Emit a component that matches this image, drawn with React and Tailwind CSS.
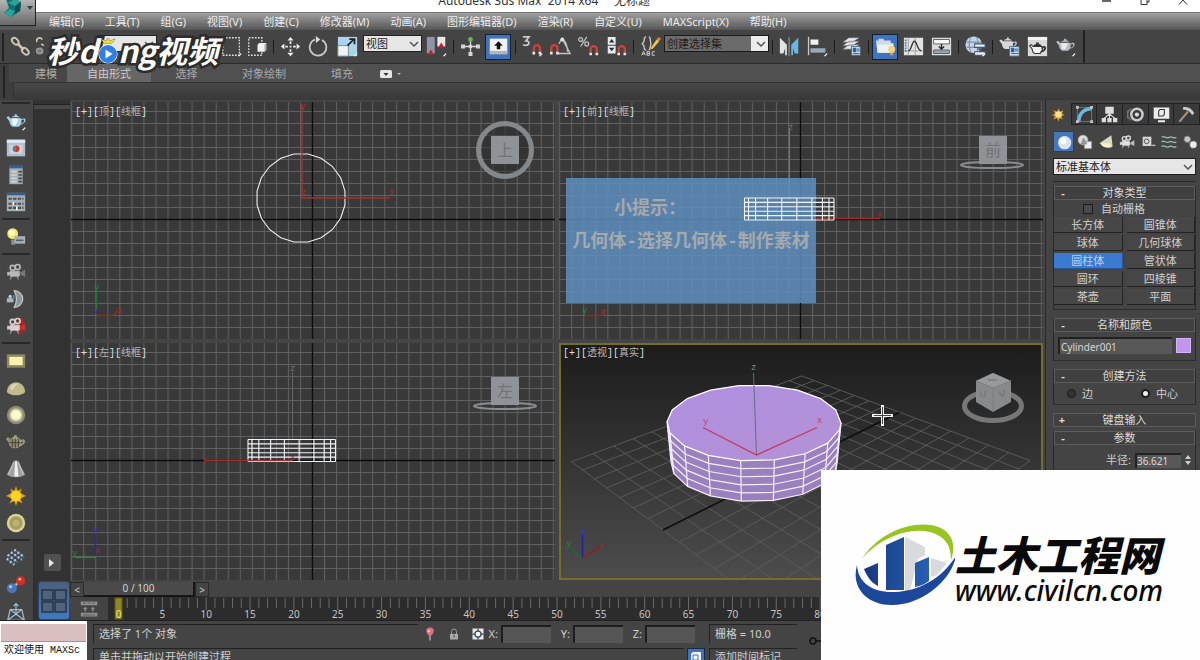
import React from "react";

/* ---------- icon drawings, all on a 24 x 24 grid ---------- */

const TEAPOT = "M6 11h10c1 3 .5 6-2 8H8c-2-1-3-3-3-5l-3-4 2-1 2 2zM7 10c1-2 7-2 8 0zM10 7h2v2h-2zM16 12c4-2 5 0 4 2s-3 3-5 3l1-1c2 0 3-2 3-3s-1-1-3 0z";
const corner = <path d="M19 23l4-4v2l-2 2z" fill="#eee" />;
const magnet = (x, y) => (
  <g transform={`translate(${x} ${y})`}>
    <path d="M1.500 9V5a3.500 3.500 0 0 1 7 0v4" fill="none" stroke="#d2413f" strokeWidth="2.600" />
    <path d="M0 9h3v3H0zM7 9h3v3H7z" fill="#e6e6e6" />
  </g>
);
const camera = (body, lens) => (
  <g>
    <circle cx="8" cy="7" r="3" fill="none" stroke={body} strokeWidth="2" />
    <circle cx="14" cy="6" r="3" fill="none" stroke={body} strokeWidth="2" />
    <path d="M5 11h11v6H5zM2 12l3 1v2l-3 1zM7 17l-2 4M13 17l2 4" fill={body} stroke={body} />
    <path d="M17 13l6-4v9l-6-3z" fill={lens} />
  </g>
);

const ICONS = {
  link: (
    <g fill="none" stroke="#cfc9b4" strokeWidth="2.200">
      <ellipse cx="6" cy="6" rx="4.500" ry="3" transform="rotate(45 6 6)" />
      <ellipse cx="17.500" cy="17.500" rx="4.500" ry="3" transform="rotate(45 17.500 17.500)" />
      <path d="M8.500 8.500l7 7" strokeWidth="3" />
    </g>
  ),
  unlink: (
    <g fill="none" stroke="#cfc9b4" strokeWidth="2">
      <path d="M1 7a3 3 0 1 1 6-3M6 9l3 2" />
      <ellipse cx="4" cy="17" rx="3.500" ry="3" stroke="#999" fill="#777" />
    </g>
  ),
  rect: (
    <g>
      <path d="M2 2h19v20H2z" fill="none" stroke="#ddd" strokeWidth="1.500" strokeDasharray="2 1.500" />
      {corner}
    </g>
  ),
  crossing: (
    <g>
      <path d="M2 2h15v20H2z" fill="none" stroke="#ddd" strokeWidth="1.500" strokeDasharray="2 1.500" />
      <path d="M12 10l2-2h8v8l-2 2h-8z" fill="#f1f1f1" />
      <path d="M20 10l2-2v8l-2 2z" fill="#aaa" />
    </g>
  ),
  move: (
    <g fill="#eee">
      <path d="M12 1l3.500 4h-7zM12 23l3.500-4h-7zM1 12l4-3.500v7zM23 12l-4-3.500v7z" />
      <path d="M11 6h2v3h-2zM11 15h2v3h-2zM6 11h3v2H6zM15 11h3v2h-3zM11 11h2v2h-2z" />
    </g>
  ),
  rotate: (
    <g>
      <path d="M8 4a9.500 9.500 0 1 0 8 .5" fill="none" stroke="#ccc" strokeWidth="2" />
      <path d="M9 0v8l5-4z" fill="#ddd" />
    </g>
  ),
  scale: (
    <g>
      <path d="M1 1h22v22H1z" fill="#a9d4ec" />
      <path d="M1 11h12v12H1z" fill="#f2f2f2" stroke="#6d8796" />
      <path d="M12 11l7-7M14 3.500h6v6" fill="none" stroke="#222" strokeWidth="2" />
      {corner}
    </g>
  ),
  pivot: (
    <g>
      <path d="M1 1h9v19H1z" fill="#8d96a5" />
      <path d="M13 1h9v11h-9z" fill="#e8e8e8" />
      <path d="M2 21h7l-3.500-5.500zM14 13h7l-3.500-5.500z" fill="#c7202a" />
      {corner}
    </g>
  ),
  manip: (
    <g stroke="#d8d8d8" strokeWidth="1.500" fill="#d8d8d8">
      <path d="M12 4v17M3 12h18" />
      <path d="M10.500 19h3v3h-3zM2 10.500h3v3H2zM19 10.500h3v3h-3z" />
      <circle cx="12" cy="4" r="2" fill="#6fb36a" stroke="#6fb36a" />
      <circle cx="12" cy="12" r="1.500" />
    </g>
  ),
  keyboard: (
    <g>
      <path d="M2 3h20v17H2z" fill="#f2f2f2" />
      <path d="M2 17h20v4H2z" fill="#b5b5b5" />
      <path d="M12 6l5 5h-3v4h-4v-4H7z" fill="#111" />
    </g>
  ),
  snap3: (
    <g>
      <path d="M1 1h7L4.500 5.500c5.500 0 4.500 7-3.500 4.500" fill="none" stroke="#c9c9c9" strokeWidth="2" />
      {magnet(12, 9)}
      {corner}
    </g>
  ),
  snapAngle: (
    <g>
      <path d="M9 20h14L14 3l-4 6M14 3c4 3 6 8 6 15" fill="none" stroke="#c4c4c4" strokeWidth="1.500" />
      <circle cx="14" cy="4" r="2.200" fill="#e4e4e4" />
      {magnet(0, 9)}
    </g>
  ),
  snapPct: (
    <g>
      <g fill="none" stroke="#c4c4c4" strokeWidth="1.400">
        <circle cx="3" cy="4" r="2.200" />
        <circle cx="10" cy="9" r="2.200" />
        <path d="M10 1L3 12" />
      </g>
      {magnet(13, 10)}
    </g>
  ),
  snapSpin: (
    <g>
      <path d="M2 1h9v9H2zM2 11h9v9H2z" fill="#e8e8e8" />
      <path d="M3.500 7.500h6l-3-4zM3.500 13.500h6l-3 4z" fill="#222c4a" />
      {magnet(13, 10)}
    </g>
  ),
  braces: (
    <g>
      <path d="M7 1C4 1 5 4 4.500 6.500L2.500 9l2 2c.5 2-.5 5 2.500 5M10 1c3 0 1 4 2.500 8-1.500 3 0 7-2.500 7" fill="none" stroke="#ccc" strokeWidth="1.500" />
      <path d="M12 14l7-10 3 2-8 9z" fill="#f0c94b" />
      <path d="M19 4l2-3 3 2-2 3z" fill="#ea7b3a" />
      <path d="M2 22l2-4.500L6 22M2.500 20.500h3M8 17.500v4.500h3v-2H8h3v-2zM17 18h-3v4h3" fill="none" stroke="#ccc" strokeWidth="1.100" />
    </g>
  ),
  mirror: (
    <g>
      <path d="M1 2l8 8v12H7v-8l-2 6H1z" fill="#e3e3e3" />
      <path d="M11 1h1v22h-1z" fill="#aaa" />
      <path d="M22 2l-8 8v12h2v-8l2 6h4z" fill="#6cb6e2" />
    </g>
  ),
  align: (
    <g>
      <path d="M1 1h1.500v21H1z" fill="#c8c8c8" />
      <path d="M4 4h9v6H4z" fill="#f1f1f1" />
      <path d="M4 14h17v5H4z" fill="#9aa8ba" />
      {corner}
    </g>
  ),
  layers: (
    <g>
      <path d="M9 2h12l-8 5H2zM9 6h12l-8 5H2zM9 10h12l-8 5H2z" fill="#e9e9e9" stroke="#666" strokeWidth=".6" />
      <path d="M12 12h10v10H12z" fill="#c8dcee" stroke="#567" />
      <path d="M14 14h3v4h-3zM18 15h3M18 17h3M14 20h7" fill="#2b5a92" stroke="#2b5a92" />
    </g>
  ),
  folder: (
    <g>
      <path d="M1 5h3V3h6v2h8v3h3v11H3z" fill="#cfdbe8" />
      <path d="M2 10h19v9H3z" fill="#eef2f5" />
      <circle cx="19" cy="15" r="4" fill="#f6d27a" />
      <path d="M17.500 19h3v3h-3z" fill="#d89d45" />
    </g>
  ),
  curve: (
    <g>
      <path d="M1 2h22v20H1z" fill="#e3e3e3" />
      <path d="M6 2v20M1 17h22M14 2v20" stroke="#9a9a9a" />
      <path d="M6 17c4 0 4-11 7-11s3 10 8 11" fill="none" stroke="#333" strokeWidth="1.500" />
      <path d="M3 4v14" stroke="#4a7fa8" strokeWidth="2" strokeDasharray="2 1" />
    </g>
  ),
  schematic: (
    <g>
      <path d="M1 2h22v20H1z" fill="#dcdcdc" />
      <path d="M3 4h18v5H3z" fill="#fff" stroke="#555" />
      <path d="M3 16h18v4H3z" fill="#9aa5b3" stroke="#555" />
      <path d="M12 9v6M9 12l3 3 3-3" fill="none" stroke="#222" strokeWidth="1.500" />
    </g>
  ),
  material: (
    <g>
      <circle cx="10" cy="10" r="9.500" fill="#c6d4e4" />
      <path d="M2 7h16M2 13h16M7 1c-3 6-3 12 0 18M13 1c3 6 3 12 0 18" fill="none" stroke="#7890ac" strokeWidth="1.200" />
      <path d="M11 9h12v4H11zM11 18h12v4H11zM17 13v5M14 15h6" fill="#e9eef4" stroke="#3a5878" strokeWidth="1.200" />
      {corner}
    </g>
  ),
  renderSetup: (
    <g>
      <path d={TEAPOT} fill="#d8d8d8" transform="translate(-2 -6) scale(1.100)" />
      <path d="M12 12h11v11H12z" fill="#c8dcee" stroke="#567" />
      <path d="M14 14h3v4h-3zM18 15h4M18 17h4M14 20h8" fill="#2b5a92" stroke="#2b5a92" />
    </g>
  ),
  renderFrame: (
    <g>
      <path d="M1 1h22v22H1z" fill="#d9d9d9" />
      <path d="M1 3h22" stroke="#f6f6f6" strokeWidth="3" />
      <path d={TEAPOT} fill="#f2f2f2" stroke="#333" strokeWidth="1.200" transform="translate(1 1)" />
    </g>
  ),
  render: (
    <g>
      <path d={TEAPOT} fill="#b9bdc2" transform="translate(-1 -5) scale(1.150)" />
      <path d="M7 8h8l-3 7H8z" fill="#e9ebee" />
      {corner}
    </g>
  ),

  teapotBlue: (
    <g>
      <path d={TEAPOT} fill="#a9cfe4" transform="translate(-2 -5) scale(1.250)" />
      <path d="M7 9h8l-3 8H8z" fill="#eef7fb" />
      {corner}
    </g>
  ),
  frameRed: (
    <g>
      <path d="M1 2h22v20H1z" fill="#aebccb" />
      <path d="M1 2h22v4H1z" fill="#dfe5ec" />
      <path d="M4 8h16v11H4z" fill="#ccd3db" />
      <circle cx="12" cy="13" r="4" fill="#6d7785" />
      <path d="M12 9a4 4 0 0 1 0 8z" fill="#d23a30" />
    </g>
  ),
  listPanel: (
    <g>
      <path d="M4 1h16v22H4z" fill="#a7adb0" />
      <path d="M4 1h16v3H4z" fill="#2f5f95" />
      <path d="M6 8h7M6 12h7M6 16h7M6 20h7" stroke="#d2d2d2" strokeWidth="2" />
      <path d="M15 8h4M15 12h4M15 16h4M15 20h4" stroke="#444" strokeWidth="2" />
    </g>
  ),
  gridPanel: (
    <g>
      <path d="M1 1h22v22H1z" fill="#a7adb0" />
      <path d="M1 1h22v3H1z" fill="#2f5f95" />
      <path d="M3 8h18M3 14h18M3 19h18" stroke="#4b4f52" strokeWidth="2.500" strokeDasharray="4 1.500" />
      <path d="M9 12v4M13 17v5" stroke="#f1f1f1" strokeWidth="2" />
    </g>
  ),
  bulb: (
    <g>
      <circle cx="8" cy="8" r="6.500" fill="#f4e96a" />
      <circle cx="7" cy="7" r="3.500" fill="#fffbd0" />
      <path d="M6 15h5v5c-1 2-4 2-5 0z" fill="#888" />
      <path d="M10 11h13v9H10z" fill="#a9b0b4" />
      <path d="M12 16h9" stroke="#5a6064" strokeWidth="2" />
    </g>
  ),
  camGray: camera("#b8b8b8", "#787878"),
  camHalf: (
    <g>
      <path d="M10 2a10 10 0 0 1 0 20c3-6 3-14 0-20z" fill="#8f9497" stroke="#c6cacc" strokeWidth="1.500" />
      <circle cx="5" cy="9" r="2" fill="#bcd" />
      <path d="M1 11h8v5H1z" fill="#a4b7c2" />
      <circle cx="10" cy="9" r="2" fill="#567c8e" />
    </g>
  ),
  camRed: (
    <g>
      <path d="M13 3c8-2 10 2 9 9s-2 10-8 10z" fill="#a52626" />
      {camera("#d9cfcf", "#c53333")}
    </g>
  ),
  rectLight: (
    <g>
      <path d="M1 4h22v16H1z" fill="#8d8a63" />
      <path d="M4 7h16v10H4z" fill="#f9f3ae" />
    </g>
  ),
  dome: (
    <g>
      <path d="M1 17a11 12 0 0 1 22 0c-5 5-17 5-22 0z" fill="#bfbb8f" />
      <path d="M5 12c2-5 7-6 10-5-3 1-6 4-7 8z" fill="#dedbb4" />
    </g>
  ),
  sphereLight: (
    <g>
      <circle cx="12" cy="12" r="11" fill="#8e8c74" />
      <circle cx="12" cy="12" r="8" fill="#c9c6a0" />
      <circle cx="12" cy="12" r="6" fill="#fcf8cf" />
    </g>
  ),
  meshTeapot: (
    <g transform="translate(-2 -4) scale(1.200)">
      <path d={TEAPOT} fill="#8c8a6c" stroke="#b4b294" strokeWidth=".7" />
      <path d="M8 10v9M11 10v9M14 10v9M5 14h11" stroke="#47463a" />
    </g>
  ),
  cone: (
    <g>
      <path d="M9 3c2-2 4-2 6 0l8 16c-6 4-16 4-22 0z" fill="#a2a2a2" />
      <path d="M11 3h2l2 18h-5z" fill="#efefef" />
      <path d="M9 4L3 19M15 4l6 15" stroke="#c9c9c9" />
    </g>
  ),
  sun: (
    <g>
      <path d="M12 0l2 6 5-3-2 5 7 4-7 3 3 6-6-3-2 6-2-6-6 3 3-6-7-3 7-4-2-5 5 3z" fill="#dca41b" />
      <circle cx="12" cy="12" r="6.500" fill="#ffd21e" />
    </g>
  ),
  disc: (
    <g>
      <circle cx="12" cy="12" r="11" fill="#d8d39a" />
      <circle cx="12" cy="12" r="8" fill="#a59f60" />
      <circle cx="12" cy="12" r="4" fill="#b9b375" />
    </g>
  ),
  particles: (
    <g>
      <path d="M2 8l12 9M6 5l13 9M10 2l12 9M1 13l9 7" stroke="#4d7898" strokeWidth="1.500" />
      <path d="M2 8l12 9M6 5l13 9M10 2l12 9M1 13l9 7" stroke="#b5cfe0" strokeWidth="3" strokeDasharray="2 3" />
    </g>
  ),
  molecule: (
    <g>
      <path d="M7 16L17 7" stroke="#b9b9b9" strokeWidth="3" />
      <circle cx="7" cy="16" r="6" fill="#4d76b8" />
      <circle cx="5.500" cy="14" r="2" fill="#a9c2e6" />
      <circle cx="17.500" cy="7" r="5.500" fill="#cf2f26" />
      <circle cx="16.500" cy="5" r="1.800" fill="#f19a90" />
    </g>
  ),
  pyramid: (
    <g fill="none" stroke="#9fb9d0" strokeWidth="1.500">
      <path d="M12 2v7M9 5l3-3 3 3M5 9h14l3 13H2zM5 9l17 13M19 9L2 22M12 9v7" />
    </g>
  ),

  star: (
    <g>
      <path d="M12 3l2 5 5-2-2 5 4 2-5 1 2 5-4-2-2 5-2-5-5 2 2-5-5-1 5-2-2-5 5 2z" fill="#e29a2e" />
      <circle cx="12" cy="12" r="4.500" fill="#ffe08a" />
    </g>
  ),
  modify: (
    <g>
      <path d="M2 2h20v20H2z" fill="none" stroke="#7c8a94" />
      <path d="M4 22C4 11 11 4 22 4" fill="none" stroke="#6db6e2" strokeWidth="5" />
      <path d="M0 0h4v4H0zM20 0h4v4h-4zM0 20h4v4H0zM20 20h4v4h-4z" fill="#c5c5c5" />
    </g>
  ),
  hierarchy: (
    <g fill="#dedede">
      <path d="M6 1h12v10H6zM1 17h6v6H1zM9 17h6v6H9zM17 17h6v6h-6z" />
      <path d="M12 10v8M12 11L4 18M12 11l8 7" stroke="#dedede" strokeWidth="1.500" />
    </g>
  ),
  motion: (
    <g fill="none">
      <path d="M6 4a9 9 0 0 0 0 16M2 6a9 9 0 0 0 0 12" stroke="#777" strokeWidth="1.500" />
      <circle cx="14" cy="12" r="8" stroke="#c6ccd0" strokeWidth="3.500" />
      <circle cx="14" cy="12" r="3" fill="#ddd" />
    </g>
  ),
  display: (
    <g>
      <path d="M1 2h22v16H1zM7 20h10v3H7z" fill="#ececec" />
      <path d="M8 7l2-2h6v7l-2 2H8z" fill="none" stroke="#333" strokeWidth="1.500" />
    </g>
  ),
  hammer: (
    <g>
      <path d="M7 2c6-2 12 1 16 8l-3 3c-3-5-7-8-13-8z" fill="#c9c9c9" />
      <path d="M14 8L2 22" stroke="#a89482" strokeWidth="3" />
    </g>
  ),
  sphere: (
    <g>
      <circle cx="13" cy="13" r="10" fill="#dce4ef" />
      <circle cx="10.500" cy="10" r="5" fill="#fff" />
    </g>
  ),
  shapes: (
    <g stroke="#888" strokeWidth="1">
      <circle cx="9" cy="9" r="7.500" fill="#ddd" />
      <path d="M11 11h11v11H11z" fill="#eee" />
      <path d="M10 6l5 9H6z" fill="#999" />
    </g>
  ),
  spot: (
    <g>
      <path d="M20 2l2 17L2 14z" fill="#d9d9c3" />
      <path d="M3 14c4 6 10 8 18 6l-4-6z" fill="#f6f3c4" />
    </g>
  ),
  camWhite: camera("#e2e2e2", "#bdbdbd"),
  tape: (
    <g>
      <path d="M4 4h13v14H4z" fill="#d6d6d6" />
      <circle cx="10" cy="11" r="3.500" fill="#d6d6d6" stroke="#555" strokeWidth="1.500" />
      <path d="M17 17h6" stroke="#bbb" strokeWidth="2" />
    </g>
  ),
  waves: (
    <path
      d="M1 5c4-4 6 3 11 0s6 3 11 0M1 12c4-4 6 3 11 0s6 3 11 0M1 19c4-4 6 3 11 0s6 3 11 0"
      fill="none"
      stroke="#a3b3b0"
      strokeWidth="2"
    />
  ),
  gears: (
    <g>
      <circle cx="8" cy="8" r="4.500" fill="#c4c4c4" stroke="#999" strokeDasharray="2 2" strokeWidth="2" />
      <circle cx="17" cy="16" r="5" fill="#eee" stroke="#aaa" strokeDasharray="2 2" strokeWidth="2" />
    </g>
  ),

  balloon: (
    <g>
      <path d="M12 1c9 0 8 9 1 15h-2C4 10 3 1 12 1z" fill="#d9747e" />
      <circle cx="10" cy="7" r="2" fill="#f7c6c8" />
      <path d="M12 16v7" stroke="#ccc" strokeWidth="2" />
    </g>
  ),
  lock: (
    <g>
      <path d="M7 12V7a5 5 0 0 1 10 0v5" fill="none" stroke="#9c9c9c" strokeWidth="2" />
      <path d="M4 12h16v11H4z" fill="#a9a9a9" />
      <path d="M12 14v5" stroke="#444" strokeWidth="2" />
    </g>
  ),
  target: (
    <g>
      <path d="M1 1h22v22H1z" fill="#e6e6e6" />
      <circle cx="12" cy="12" r="6" fill="#fff" stroke="#3c4650" strokeWidth="2.500" />
      <path d="M12 1v5M12 18v5M1 12h5M18 12h5" stroke="#3c4650" strokeWidth="2.500" />
    </g>
  ),
  keyMode: (
    <g fill="#8f8f8f">
      <path d="M1 2h22v5H1zM1 17h22v5H1z" />
      <path d="M4 4h4M10 4h4M16 4h4M4 20h16" stroke="#484848" />
      <path d="M7 9l3 3H8v3H6v-3H4zM17 9l3 3h-2v3h-2v-3h-2z" />
    </g>
  ),
};

function Icon({ name, className = "size-[22px]" }) {
  return (
    <svg viewBox="0 0 24 24" className={`block shrink-0 ${className}`} aria-hidden="true">
      {ICONS[name]}
    </svg>
  );
}

const Chevron = ({ className }) => (
  <svg viewBox="0 0 10 6" className={`h-[6px] w-[10px] ${className}`} aria-hidden="true">
    <path d="M1 1l4 4 4-4" fill="none" stroke="#555" strokeWidth="1.500" />
  </svg>
);

function Dropdown({ label, value, className, textClass }) {
  return (
    <div className={`grid items-center ${className}`}>
      <select
        aria-label={label}
        className={`col-start-1 row-start-1 h-full w-full appearance-none truncate pl-[2px] pr-4 outline-none ${textClass}`}
      >
        <option>{value}</option>
      </select>
      <Chevron className="pointer-events-none col-start-1 row-start-1 mr-[2px] justify-self-end" />
    </div>
  );
}

/* ---------- top bars ---------- */

const MENUS = [
  "编辑(E)", "工具(T)", "组(G)", "视图(V)", "创建(C)", "修改器(M)", "动画(A)",
  "图形编辑器(D)", "渲染(R)", "自定义(U)", "MAXScript(X)", "帮助(H)",
];

function Header() {
  return (
    <header className="flex h-[30px] shrink-0 bg-[#5a5a5a]">
      <button
        aria-label="应用程序菜单"
        className="flex h-[26px] w-9 shrink-0 items-start justify-center gap-1 border-b border-r border-[#222] bg-gradient-to-b from-[#b4b4b4] to-[#6a6a6a]"
      >
        <svg viewBox="0 0 20 20" className="-mt-px h-5 w-5" aria-hidden="true">
          <path d="M3 0h9l6 3-1 9-9 6-7-4 5-5z" fill="#116f70" />
          <path d="M12 0l6 3-6 4-7-3zM1 14l6-4 5 2-4 6z" fill="#2aa39c" />
          <path d="M12 7l6-4-1 9-5 3z" fill="#0b4f55" />
        </svg>
        <svg viewBox="0 0 6 4" className="mt-[6px] h-1 w-[6px]" aria-hidden="true">
          <path d="M0 0h6L3 4z" fill="#1f4a4c" />
        </svg>
      </button>
      <div className="flex min-w-0 flex-1 flex-col">
        <div className="flex h-3 items-start overflow-hidden bg-white">
          <span className="flex-[404]" />
          <h1 className="-mt-[7px] whitespace-pre font-['Noto_Sans','Noto_Sans_CJK_SC',sans-serif] text-[12px] leading-[16px] text-[#333]">
            Autodesk 3ds Max  2014 x64     无标题
          </h1>
          <span className="flex-[454]" />
          <div className="flex gap-7 pr-3">
            <button aria-label="最小化">
              <svg viewBox="0 0 10 6" className="h-[6px] w-[10px]"><path d="M0 1h9" stroke="#333" strokeWidth="1.500" /></svg>
            </button>
            <button aria-label="还原">
              <svg viewBox="0 0 10 6" className="h-[6px] w-[10px]"><path d="M1 0v4.500h6V0M7 2h2V0" fill="none" stroke="#333" /></svg>
            </button>
            <button aria-label="关闭">
              <svg viewBox="0 0 10 6" className="h-[6px] w-[10px]"><path d="M1 4.500L5 0l4 4.500" fill="none" stroke="#333" /></svg>
            </button>
          </div>
        </div>
        <nav className="flex h-[18px] items-center gap-[21px] border-t border-[#777] bg-gradient-to-b from-[#a0a0a0] to-[#565656] pl-[13px] text-[11px] leading-[16px] text-[#ececec]">
          {MENUS.map((m) => (
            <button key={m} className="whitespace-nowrap">{m}</button>
          ))}
        </nav>
      </div>
    </header>
  );
}

const Sep = () => (
  <span className="flex w-[6px] shrink-0 justify-center">
    <span className="h-[14px] w-px bg-[#1c1c1c]" />
  </span>
);

function Tool({ name, label, className = "w-7", active }) {
  return (
    <button aria-label={label} className={`flex shrink-0 justify-center ${className}`}>
      <span className={`flex size-[26px] items-center justify-center ${active ? "border border-[#123] bg-[#3f74bd]" : ""}`}>
        <Icon name={name} className="size-[21px]" />
      </span>
    </button>
  );
}

function Toolbar() {
  return (
    <div className="relative flex h-[34px] shrink-0 border-b border-[#2a2a2a] bg-[#444]">
      <div className="flex items-center border-r-2 border-[#222] pr-1">
        <span className="ml-[2px] mr-[2px] h-7 w-[2px] bg-[#222]" />
        <Tool name="link" label="选择并链接" />
        <Tool name="unlink" label="取消链接" className="w-6" />
        <Dropdown
          label="选择过滤器"
          value=""
          className="mb-[6px] ml-[39px] h-[17px] w-[60px] border border-[#222] bg-[#e6e6e6]"
          textClass="text-[11px] text-[#222]"
        />
        <Tool name="rect" label="矩形选择区域" className="ml-[61px] w-[26px]" />
        <Tool name="crossing" label="窗口/交叉" className="w-[26px]" />
        <Sep />
        <Tool name="move" label="选择并移动" />
        <Tool name="rotate" label="选择并旋转" />
        <Tool name="scale" label="选择并缩放" className="w-[31px]" />
        <Dropdown
          label="参考坐标系"
          value="视图"
          className="mb-[6px] h-[17px] w-[59px] border border-[#222] bg-[#e6e6e6]"
          textClass="text-[11px] text-[#222]"
        />
        <Tool name="pivot" label="使用轴点中心" className="w-7" />
        <Sep />
        <Tool name="manip" label="选择并操纵" />
        <Tool name="keyboard" label="键盘快捷键覆盖切换" active />
        <Sep />
        <Tool name="snap3" label="捕捉开关" />
        <Tool name="snapAngle" label="角度捕捉" />
        <Tool name="snapPct" label="百分比捕捉" />
        <Tool name="snapSpin" label="微调器捕捉" />
        <Sep />
        <Tool name="braces" label="编辑命名选择集" />
        <Dropdown
          label="命名选择集"
          value="创建选择集"
          className="mb-[6px] h-[17px] w-[105px] border border-[#1a1a1a] bg-[linear-gradient(to_right,#6b6b6b_86px,#ececec_86px)]"
          textClass="text-[11px] text-[#1d1d1d]"
        />
        <Sep />
        <Tool name="mirror" label="镜像" />
        <Tool name="align" label="对齐" />
        <Sep />
        <Tool name="layers" label="层管理器" />
        <Sep />
        <Tool name="folder" label="切换功能区" active />
        <Tool name="curve" label="曲线编辑器" />
        <Tool name="schematic" label="图解视图" />
        <Sep />
        <Tool name="material" label="材质编辑器" />
        <Sep />
        <Tool name="renderSetup" label="渲染设置" />
        <Tool name="renderFrame" label="渲染帧窗口" />
        <Tool name="render" label="渲染产品" />
      </div>

      {/* video brand laid over the bar */}
      <div className="pointer-events-none absolute left-[47px] top-1 z-10 flex items-center whitespace-nowrap font-['Noto_Sans_CJK_SC',sans-serif] text-[31px] font-bold italic leading-[32px] text-white [-webkit-text-stroke:5px_#2c2c2c] [paint-order:stroke_fill]">
        <span>秒d</span>
        <svg viewBox="0 0 20 30" className="z-10 h-[30px] w-5" aria-hidden="true">
          <path d="M6 8L3 4l5 2 2-3 2 3 5-2-3 4z" fill="#f5d92d" stroke="#333" strokeWidth=".6" />
          <circle cx="10" cy="19" r="9" fill="#2f7fe6" stroke="#fff" strokeWidth="1.200" />
          <path d="M7.500 14.500v9l7-4.500z" fill="#fff" />
        </svg>
        <span>ng视频</span>
      </div>
    </div>
  );
}

function Ribbon() {
  return (
    <div className="flex h-9 shrink-0 bg-[#3d3d3d]">
      <span className="ml-[3px] mr-1 mt-[2px] h-8 w-[2px] bg-[#222]" />
      <div className="flex flex-1 flex-col text-[11px] leading-[16px] text-[#a9a9a9]">
        <div className="flex h-[18px] bg-[#505050] *:pt-[2px]">
          <button className="w-[58px] bg-[#474747] pl-4">建模</button>
          <button className="w-[84px] bg-[#666] text-[#ccc]">自由形式</button>
          <button className="w-[71px]">选择</button>
          <button className="w-[84px]">对象绘制</button>
          <button className="w-[72px]">填充</button>
          <button aria-label="功能区选项" className="flex items-center gap-1 pl-[2px]">
            <svg viewBox="0 0 22 8" className="h-2 w-[22px]">
              <rect width="12" height="8" rx="1.500" fill="#e6e6e6" />
              <path d="M3.500 3h5L6 6z" fill="#333" />
              <path d="M17 3h4l-2 2z" fill="#bbb" />
            </svg>
          </button>
        </div>
        <div className="ml-1 flex-1 border-l border-t border-[#333] bg-gradient-to-b from-[#484848] to-[#383838]" />
      </div>
    </div>
  );
}

/* ---------- left side ---------- */

const LEFT_GROUPS = [
  ["teapotBlue", "frameRed", "listPanel", "gridPanel"],
  ["bulb"],
  ["camGray", "camHalf", "camRed"],
  ["rectLight", "dome", "sphereLight", "meshTeapot", "cone", "sun", "disc"],
  ["particles", "molecule", "pyramid"],
];

function LeftTools() {
  return (
    <aside className="flex w-[34px] shrink-0 flex-col overflow-hidden border-r border-[#2c2c2c] bg-[#454545] pt-[2px]">
      {LEFT_GROUPS.map((group, i) => (
        <div key={i} className="ml-[2px] mr-[3px] flex flex-col items-center border-t-2 border-[#282828] py-[3px]">
          {group.map((name) => (
            <button key={name} aria-label={name} className="flex h-[27px] items-center justify-center">
              <Icon name={name} className="size-5" />
            </button>
          ))}
        </div>
      ))}
    </aside>
  );
}

function LayoutColumn() {
  return (
    <aside className="flex w-9 shrink-0 flex-col items-center bg-[#323232] pt-1">
      <div className="h-[5px] w-full border-t border-[#222] bg-[#484848]" />
      <div className="flex-1" />
      <button aria-label="展开视口布局" className="mb-[10px] flex h-[17px] w-[17px] items-center justify-center rounded-[2px] bg-[#515151]">
        <svg viewBox="0 0 6 8" className="h-2 w-[6px]"><path d="M0 0l5 4-5 4z" fill="#e8e8e8" /></svg>
      </button>
      <button aria-label="四视口布局" className="flex h-[39px] w-8 items-center justify-center self-end rounded-[3px] border border-[#2c4668] bg-gradient-to-b from-[#4a5f7c] to-[#3f78c2]">
        <svg viewBox="0 0 26 24" className="h-6 w-[26px]">
          <g fill="#50637c" stroke="#273443" strokeWidth="1.500">
            <path d="M1 1h11v10H1zM14 1h11v10H14zM1 13h11v10H1zM14 13h11v10H14z" />
          </g>
        </svg>
      </button>
    </aside>
  );
}

/* ---------- viewports: drawings share one scene coordinate space ---------- */

function Scene({ box, children, className = "" }) {
  return (
    <svg viewBox={box} preserveAspectRatio="xMinYMin slice" className={`block h-full w-full ${className}`} aria-hidden="true">
      {children}
    </svg>
  );
}

function FlatGrid({ id, cx, cy, x, y }) {
  return (
    <g>
      <defs>
        <pattern id={id} x={cx} y={cy} width="12.040" height="12" patternUnits="userSpaceOnUse">
          <path d="M.5 0v12M0 .5h12.040" stroke="#616161" />
        </pattern>
      </defs>
      <rect x={x} y={y} width="484" height="237" fill="#393939" />
      <rect x={x} y={y} width="484" height="237" fill={`url(#${id})`} />
      <path d={`M${cx + 0.5} ${y}v237M${x} ${cy + 0.5}h484`} stroke="#0c0c0c" strokeWidth="1.400" />
    </g>
  );
}

function ViewLabel({ parts }) {
  return (
    <div className="pointer-events-none absolute left-1 top-1 whitespace-nowrap font-['Liberation_Mono','Noto_Sans_CJK_SC',monospace] text-[10px] leading-[14px] text-[#ddd]">
      [+]
      {parts.map((p) => (
        <span key={p}>[<span className="text-[#b4b4b4]">{p}</span>]</span>
      ))}
    </div>
  );
}

function Cube({ x, y, text }) {
  return (
    <g>
      <rect x={x} y={y} width="28" height="28" fill="#8f9296" />
      <text x={x + 14} y={y + 20} textAnchor="middle" fontSize="16" fill="#707479" fontFamily="Noto Sans CJK SC, sans-serif">{text}</text>
    </g>
  );
}

const WIRE_X = [0, 4, 11, 23, 37, 52, 67, 77.500, 84, 89];

function BoxWire({ x, y, width }) {
  const s = width / 89;
  return (
    <g fill="none" stroke="#f2f6fa" strokeWidth="1.100">
      {WIRE_X.map((dx) => <path key={dx} d={`M${x + dx * s} ${y}v22`} />)}
      {[0, 4.400, 8.800, 13.200, 17.600, 22].map((dy) => <path key={dy} d={`M${x} ${y + dy}h${width}`} />)}
    </g>
  );
}

const ring = Array.from({ length: 20 }, (_, i) => {
  const a = ((i + 0.5) * Math.PI) / 10;
  return `${301 + 44.5 * Math.cos(a)},${198 + 44.5 * Math.sin(a)}`;
}).join(" ");

const AXIS_TEXT = { fontSize: 9, fontFamily: "Liberation Mono, monospace" };

/* ground plane: maps (u, v) in 0..1 onto the perspective floor */
function floor(u, v) {
  const s = u * 2;
  const w = 1 - 0.168 * s + 0.34 * v;
  return [(571.7 - 20.1 * s + 502.6 * v) / w, (461.7 - 20.7 * s + 42.1 * v) / w];
}
const seg = (a, b) => `M${a[0]} ${a[1]}L${b[0]} ${b[1]}`;
const STEPS = Array.from({ length: 15 }, (_, i) => i / 14);

/* cylinder: k runs from the top rim (0) to the bottom rim (1) */
const rim = (deg, k) => {
  const a = (deg * Math.PI) / 180;
  return [754 + (87 - 4 * k) * Math.cos(a), 423 + 40.5 * k + 38 * Math.sin(a)];
};
const SIDES = [182, 165, 143, 121.700, 98.800, 76.500, 54, 32, 10, 0];
const BACK = [0, -20, -40, -60, -80, -100, -120, -140, -160, -178];
const poly = (pts) => pts.map((p) => p.join(",")).join(" ");
const topFace = poly([...SIDES.map((d) => rim(d, 0)), ...BACK.map((d) => rim(d, 0))]);
const sideFace = poly([...SIDES.map((d) => rim(d, 0)), ...[...SIDES].reverse().map((d) => rim(d, 1))]);

function Perspective() {
  return (
    <Scene box="561 345 480 233">
      <defs>
        <linearGradient id="sky" x1="0" x2="0" y1="0" y2="1">
          <stop offset="0" stopColor="#1c1c1c" />
          <stop offset="1" stopColor="#4c4c4c" />
        </linearGradient>
        <linearGradient id="lid" x1="0" x2="1" y1="0" y2="1">
          <stop offset="0" stopColor="#ae90e2" />
          <stop offset="1" stopColor="#b491d4" />
        </linearGradient>
      </defs>
      <rect x="561" y="345" width="480" height="233" fill="url(#sky)" />
      <g stroke="#5c5c5c" strokeWidth=".9">
        {STEPS.map((t) => <path key={t} d={seg(floor(t, 0), floor(t, 1)) + seg(floor(0, t), floor(1, t))} />)}
      </g>
      <path d={seg(floor(0.5, 0), floor(0.5, 1))} stroke="#0d0d0d" strokeWidth="1.600" />
      <polygon points={sideFace} fill="#9a80bd" />
      <g fill="none" stroke="#f4eefb" strokeWidth="1.200">
        {[0.2, 0.4, 0.6, 0.8, 1].map((k) => <polyline key={k} points={poly(SIDES.map((d) => rim(d, k)))} />)}
        {SIDES.map((d) => <path key={d} d={seg(rim(d, 0), rim(d, 1))} />)}
      </g>
      <polygon points={topFace} fill="url(#lid)" stroke="#fff" strokeWidth="1.200" />
      <path d="M756.500 455L753.500 373" stroke="#6f6a7a" />
      <path d="M703 427.500L756.500 455 817 427.500" fill="none" stroke="#c5365c" strokeWidth="1.300" />
      <g {...AXIS_TEXT}>
        <text x="703" y="424" fill="#cf3f66">y</text>
        <text x="817" y="423" fill="#cf3f66">x</text>
        <text x="751" y="370" fill="#888">z</text>
      </g>
      <path d="M882.500 405v21M872 415.500h21" stroke="#f4f4f4" strokeWidth="3" />
      <path d="M882.500 407v17M874 415.500h17" stroke="#444" />
      <ellipse cx="993" cy="406" rx="28.500" ry="14.500" fill="none" stroke="#777" strokeWidth="5" />
      <path d="M993 373l18 8v21l-18 10-17-10v-21z" fill="#88898b" />
      <path d="M976 381l17-8 18 8-18 7z" fill="#98999b" />
      <path d="M993 388v24M976 381l17 7 18-7" fill="none" stroke="#7c7d7f" />
      <path d="M981 391v6M986 390l-2 8M999 392l4 5M1004 389v7M988 380h9" stroke="#77787b" strokeWidth="1.300" />
      <g fill="none">
        <path d="M582.500 558v-24" stroke="#24249c" strokeWidth="1.600" />
        <path d="M582 558l-13-11" stroke="#1f6a30" strokeWidth="1.600" />
        <path d="M583 558l17-11" stroke="#8a2424" strokeWidth="1.600" />
      </g>
      <g {...AXIS_TEXT}>
        <text x="581" y="535" fill="#3535bf">z</text>
        <text x="566" y="546" fill="#27853c">y</text>
        <text x="599" y="548" fill="#a32b2b">x</text>
      </g>
    </Scene>
  );
}

function Viewports() {
  return (
    <div className="grid min-h-0 flex-1 grid-cols-2 grid-rows-2 gap-1 bg-[#444] py-[2px] pl-px pr-[2px]">
      <section className="relative min-h-0 overflow-hidden">
        <Scene box="71 102 484 237">
          <FlatGrid id="gridTop" cx={312} cy={219} x={71} y={102} />
          <polygon points={ring} fill="none" stroke="#f0f0f0" strokeWidth="1.100" />
          <path d="M302 104v94h88" fill="none" stroke="#a03434" strokeWidth="1.400" />
          <g {...AXIS_TEXT}>
            <text x="300" y="109" fill="#a03434">y</text>
            <text x="389" y="195" fill="#a03434">x</text>
            <text x="301" y="195" fill="#a03434">z</text>
            <text x="94" y="290" fill="#27853c">y</text>
            <text x="117" y="313" fill="#a32b2b">x</text>
            <text x="94" y="313" fill="#2b2b92">z</text>
          </g>
          <path d="M96.500 290v20" stroke="#27733a" strokeWidth="1.400" />
          <path d="M97 315.500h16l5-5" fill="none" stroke="#932a2a" strokeWidth="1.400" />
          <circle cx="505" cy="150" r="23" fill="#2d2d2d" fillOpacity=".5" />
          <circle cx="505" cy="150" r="26.500" fill="none" stroke="#85888b" strokeWidth="5" />
          <Cube x={491} y={136} text="上" />
        </Scene>
        <ViewLabel parts={["顶", "线框"]} />
      </section>

      <section className="relative min-h-0 overflow-hidden">
        <Scene box="559 102 484 237">
          <FlatGrid id="gridFront" cx={800} cy={219} x={559} y={102} />
          <path d="M789.500 128v72" stroke="#777" />
          <g {...AXIS_TEXT}>
            <text x="788" y="130" fill="#777">z</text>
            <text x="600" y="314" fill="#a32b2b">x</text>
            <text x="582" y="313" fill="#27853c">y</text>
          </g>
          <path d="M585 315.500h17l4-6" fill="none" stroke="#932a2a" strokeWidth="1.400" />
          <ellipse cx="992" cy="165" rx="31" ry="3" fill="none" stroke="#8a8d90" strokeWidth="2" />
          <Cube x={979} y={136} text="前" />
        </Scene>
        <div className="absolute left-[7px] top-[76px] h-[125px] w-[250px] bg-[#5f8fc0]/85 pt-[19px] font-['Liberation_Mono','Noto_Sans_CJK_SC',monospace] text-[18px] font-bold leading-[24px] text-[#a6a9ad]">
          <p className="pl-12">小提示：</p>
          <p className="mt-[9px] whitespace-nowrap text-center">几何体-选择几何体-制作素材</p>
        </div>
        <div className="pointer-events-none absolute inset-0">
          <Scene box="559 102 484 237">
            <path d="M816 218.500h64" stroke="#a02c2c" strokeWidth="1.600" />
            <text x="877" y="217" fill="#a02c2c" {...AXIS_TEXT}>x</text>
            <BoxWire x={744.5} y={198} width={89.5} />
          </Scene>
        </div>
        <ViewLabel parts={["前", "线框"]} />
      </section>

      <section className="relative min-h-0 overflow-hidden">
        <Scene box="71 343 484 237">
          <FlatGrid id="gridLeft" cx={312} cy={460} x={71} y={343} />
          <path d="M292.500 372v68" stroke="#666" />
          <BoxWire x={248} y={439.5} width={87.5} />
          <path d="M205 460.500h88" stroke="#a03030" strokeWidth="1.600" />
          <g {...AXIS_TEXT}>
            <text x="290" y="371" fill="#777">z</text>
            <text x="202" y="462" fill="#a03030">y</text>
            <text x="290" y="460" fill="#a03030">x</text>
            <text x="93" y="533" fill="#3333ad">z</text>
            <text x="72" y="556" fill="#27853c">y</text>
            <text x="95" y="553" fill="#a32b2b">x</text>
          </g>
          <path d="M95.500 534v22" stroke="#2a2aa2" strokeWidth="1.600" />
          <path d="M75 557.500h21" stroke="#27853c" strokeWidth="1.400" />
          <ellipse cx="505" cy="406" rx="31" ry="3" fill="none" stroke="#8a8d90" strokeWidth="2" />
          <Cube x={491} y={377} text="左" />
        </Scene>
        <ViewLabel parts={["左", "线框"]} />
      </section>

      <section className="relative min-h-0 overflow-hidden border-2 border-[#756c2e]">
        <Perspective />
        <div className="absolute -left-[2px] -top-[2px]">
          <ViewLabel parts={["透视", "真实"]} />
        </div>
      </section>
    </div>
  );
}

const FRAMES = Array.from({ length: 101 }, (_, i) => i);

function TimeBar() {
  return (
    <div className="shrink-0 bg-[#444]">
      <div className="flex h-[15px] text-[10px] leading-[14px] text-[#d0d0d0]">
        <button aria-label="上一帧" className="w-[14px] border border-[#2a2a2a] leading-[12px]">&lt;</button>
        <button className="w-[111px] border-b-2 border-r-2 border-[#161616] bg-[#4a4a4a] leading-[13px]">0 / 100</button>
        <button aria-label="下一帧" className="w-[14px] border border-[#2a2a2a] leading-[12px]">&gt;</button>
      </div>
      <div className="flex h-[23px]">
        <button aria-label="打开迷你曲线编辑器" className="flex w-[38px] items-center justify-center">
          <Icon name="keyMode" className="size-[18px]" />
        </button>
        <svg className="block h-[23px] min-w-0 flex-1 bg-[#2c2c2c]" aria-label="时间轴">
          {FRAMES.map((f) => (
            <path key={f} d={`M${10.5 + f * 8.77} ${f % 5 ? 1 : 0}v${f % 5 ? 10 : 13}`} stroke="#6a6a6a" />
          ))}
          <rect x="7" y="1" width="7" height="21" fill="#8f8822" stroke="#5f5a14" />
          {FRAMES.filter((f) => f % 5 === 0).map((f) => (
            <text key={f} x={10.5 + f * 8.77} y="21" textAnchor="middle" fontSize="10" fill={f ? "#c4c4c4" : "#f2ec7a"} fontFamily="Noto Sans, sans-serif">
              {f}
            </text>
          ))}
        </svg>
      </div>
    </div>
  );
}

/* ---------- command panel ---------- */

function Rollout({ title, open = true, children }) {
  return (
    <section className={open && children ? "border border-t-0 border-[#2b2b2b]" : ""}>
      <h2>
        <button
          aria-expanded={open}
          className="grid h-[14px] w-full grid-cols-[16px_1fr_16px] items-center border border-[#5c5c5c] bg-[#404040] text-[11px] leading-[12px] text-[#dcdcdc]"
        >
          <span className="font-bold">{open ? "-" : "+"}</span>
          <span>{title}</span>
        </button>
      </h2>
      {children}
    </section>
  );
}

const TYPES = ["长方体", "圆锥体", "球体", "几何球体", "圆柱体", "管状体", "圆环", "四棱锥", "茶壶", "平面"];
const TABS = [
  ["star", "创建"], ["modify", "修改"], ["hierarchy", "层次"],
  ["motion", "运动"], ["display", "显示"], ["hammer", "实用程序"],
];
const KINDS = [
  ["sphere", "几何体"], ["shapes", "图形"], ["spot", "灯光"], ["camWhite", "摄影机"],
  ["tape", "辅助对象"], ["waves", "空间扭曲"], ["gears", "系统"],
];
const RADIO = "size-[9px] appearance-none rounded-full border border-[#1c1c1c] bg-[#333] checked:border-2 checked:bg-[#f0f0f0]";

function CommandPanel() {
  return (
    <aside className="w-[155px] shrink-0 overflow-hidden border-l border-[#2a2a2a] bg-[#444] pt-[3px] text-[11px] leading-[14px] text-[#cfcfcf]">
      <div className="flex h-[22px]">
        {TABS.map(([name, label], i) => (
          <button
            key={name}
            aria-label={label}
            className={`flex flex-1 items-center justify-center ${i ? "border border-l-0 border-[#222] bg-[#3a3a3a]" : "border-r border-[#222]"}`}
          >
            <Icon name={name} className="size-[17px]" />
          </button>
        ))}
      </div>
      <div className="mt-[6px] flex h-[21px] pl-[7px]">
        {KINDS.map(([name, label], i) => (
          <button
            key={name}
            aria-label={label}
            className={`flex w-[21px] items-center justify-center ${i ? "" : "border border-[#26405f] bg-[#4477bb]"}`}
          >
            <Icon name={name} className="size-4" />
          </button>
        ))}
      </div>
      <div className="ml-[7px] mr-1 mt-[6px]">
        <Dropdown
          label="对象类别"
          value="标准基本体"
          className="h-[17px] border border-[#1f1f1f] bg-[#e6e6e6]"
          textClass="text-[11px] text-[#1d1d1d]"
        />
        <div className="mb-1 mt-[6px] border-t border-[#2a2a2a]" />
        <div className="flex flex-col gap-2">
          <Rollout title="对象类型">
            <label className="flex h-[17px] items-center gap-2 pl-[29px]">
              <input type="checkbox" className="size-[10px] appearance-none border border-[#1c1c1c] bg-[#4a4a4a] checked:bg-white" />
              自动栅格
            </label>
            <div className="grid grid-cols-2 gap-x-1 gap-y-[2px] pb-1">
              {TYPES.map((t) => (
                <button
                  key={t}
                  className={`h-4 border-b border-r leading-[14px] ${t === "圆柱体" ? "border-[#28588f] bg-[#3b7ad0] text-[#bcd3ef]" : "border-[#222] bg-[#474747]"}`}
                >
                  {t}
                </button>
              ))}
            </div>
          </Rollout>
          <Rollout title="名称和颜色">
            <div className="flex items-center gap-1 px-1 pb-[6px] pt-[5px]">
              <input
                aria-label="名称"
                defaultValue="Cylinder001"
                className="h-[17px] min-w-0 flex-1 border-l-2 border-t-2 border-[#222] bg-[#585858] pl-px font-['Noto_Sans',sans-serif] text-[10px] text-[#d6d6d6] outline-none"
              />
              <button aria-label="对象颜色" className="size-[15px] border border-[#d5b7f7] bg-[#bf95ee]" />
            </div>
          </Rollout>
          <Rollout title="创建方法">
            <div className="flex h-[21px] items-center gap-12 pl-[13px]">
              <label className="flex items-center gap-[6px]">
                <input type="radio" name="method" className={RADIO} />边
              </label>
              <label className="flex items-center gap-[6px]">
                <input type="radio" name="method" defaultChecked className={RADIO} />中心
              </label>
            </div>
          </Rollout>
          <div className="flex flex-col gap-1">
            <Rollout title="键盘输入" open={false} />
            <Rollout title="参数">
              <label className="flex h-[30px] items-center justify-end gap-1 pr-1">
                半径:
                <input
                  defaultValue="36.621"
                  className="h-[15px] w-[46px] border-l-2 border-t-2 border-[#222] bg-[#585858] font-['Noto_Sans',sans-serif] text-[10px] text-[#dcdcdc] outline-none"
                />
                <svg viewBox="0 0 6 10" className="h-[10px] w-[6px]" aria-hidden="true">
                  <path d="M0 4l3-4 3 4zM0 6l3 4 3-4z" fill="#ccc" />
                </svg>
              </label>
            </Rollout>
          </div>
        </div>
      </div>
    </aside>
  );
}

/* ---------- status bar ---------- */

function Coord({ axis }) {
  return (
    <label className="flex w-[72px] items-center justify-end gap-[3px]">
      {axis}:
      <input className="h-[18px] w-[50px] border-l-2 border-t-2 border-[#1e1e1e] bg-[#565656] outline-none" />
    </label>
  );
}

function StatusBar() {
  return (
    <footer className="flex h-10 shrink-0 overflow-hidden border-t border-[#222] bg-[#444] text-[11px] leading-[16px] text-[#cfcfcf]">
      <div className="mr-[6px] flex w-[87px] shrink-0 flex-col bg-white p-px">
        <div className="mt-[2px] h-[18px] border-b border-[#999] bg-[#d9bfc0]" />
        <p className="whitespace-nowrap pl-[3px] pt-px font-['Liberation_Mono','Noto_Sans_CJK_SC',monospace] text-[10px] leading-[16px] text-[#111]">欢迎使用 MAXSc</p>
      </div>
      <div className="flex flex-col gap-[5px] pt-[3px]">
        <div className="flex h-[19px] items-center">
          <p className="h-[19px] w-[325px] border-l border-t border-[#222] pl-[5px] leading-[18px]">选择了 1个 对象</p>
          <button aria-label="提示" className="flex w-6 justify-center"><Icon name="balloon" className="size-[14px]" /></button>
          <button aria-label="选择锁定切换" className="flex w-6 justify-center"><Icon name="lock" className="size-3" /></button>
          <button aria-label="绝对模式" className="flex w-6 justify-center"><Icon name="target" className="size-3" /></button>
          <div className="-ml-[11px] flex">
            <Coord axis="X" />
            <Coord axis="Y" />
            <Coord axis="Z" />
          </div>
        </div>
        <div className="flex items-start">
          <p className="h-[19px] flex-1 border-l border-t border-[#222] pl-[5px] leading-[16px]">单击并拖动以开始创建过程</p>
          <button aria-label="自适应降级" className="-mr-[10px] ml-[3px] flex h-[18px] w-[18px] items-center justify-center border border-[#172b47] bg-[#3f74bd]">
            <svg viewBox="0 0 12 12" className="size-3">
              <path d="M1 3l2-2h8v8l-2 2H1z" fill="#f4f4f4" />
              <path d="M3 4h5v5H3z" fill="none" stroke="#3f74bd" />
            </svg>
          </button>
        </div>
      </div>
      <div className="ml-[14px] flex w-[88px] flex-col gap-[5px] pt-[3px]">
        <p className="h-[19px] border-l border-t border-[#222] pl-[5px] leading-[18px]">栅格 = 10.0</p>
        <p className="h-[19px] border-l border-t border-[#222] pl-[5px] leading-[16px]">添加时间标记</p>
      </div>
      <button aria-label="设置关键点" className="ml-3 flex items-center">
        <svg viewBox="0 0 20 8" className="h-2 w-5">
          <circle cx="4" cy="4" r="3" fill="none" stroke="#111" strokeWidth="1.500" />
          <path d="M7 4h12" stroke="#111" strokeWidth="1.500" />
        </svg>
      </button>
    </footer>
  );
}

/* ---------- site badge in the lower right corner ---------- */

function SiteBadge() {
  return (
    <div className="absolute bottom-0 right-0 flex h-[190px] w-[379px] items-center bg-[#fefefe] pl-[34px]">
      <svg viewBox="0 0 100 84" className="h-[84px] w-[100px] shrink-0" aria-hidden="true">
        <defs>
          <linearGradient id="tower" x1="0" x2="1">
            <stop offset="0" stopColor="#17397f" />
            <stop offset="1" stopColor="#2760b4" />
          </linearGradient>
        </defs>
        <path d="M50 14l20 10v8l-7 4-8 32h-5zM76 35l16 5-10 12-6 2z" fill="#d9dadb" />
        <path d="M31 22l18-8v53H31zM9 46l14-6v23c-6-3-11-9-14-17zM60 40l14-6v24c-4 3-8 5-14 6z" fill="url(#tower)" />
        <path d="M7 36C20 14 50-2 76 2c18 3 27 16 20 35 0-15-6-24-21-28C52 4 24 16 7 36z" fill="#97c422" />
        <path d="M2 42c1 18 16 28 38 27 25-1 47-14 61-36-5 25-34 49-64 49C10 82-4 63 2 42z" fill="#1d489a" />
      </svg>
      <div className="flex flex-col pt-2 italic text-[#0a0a0a]">
        <strong className="font-['Noto_Sans_CJK_SC',sans-serif] text-[41px] font-black leading-[42px]">土木工程网</strong>
        <a href="#home" className="font-['Noto_Sans','Open_Sans',sans-serif] text-[28px] font-medium leading-[32px]">www.civilcn.com</a>
      </div>
    </div>
  );
}

export default function App() {
  return (
    <div className="relative flex h-screen flex-col overflow-hidden bg-[#444] font-['Noto_Sans','Noto_Sans_CJK_SC',sans-serif]">
      <Header />
      <Toolbar />
      <Ribbon />
      <main className="flex min-h-0 flex-1">
        <LeftTools />
        <LayoutColumn />
        <div className="flex min-w-0 flex-1 flex-col">
          <Viewports />
          <TimeBar />
        </div>
        <CommandPanel />
      </main>
      <StatusBar />
      <SiteBadge />
    </div>
  );
}
